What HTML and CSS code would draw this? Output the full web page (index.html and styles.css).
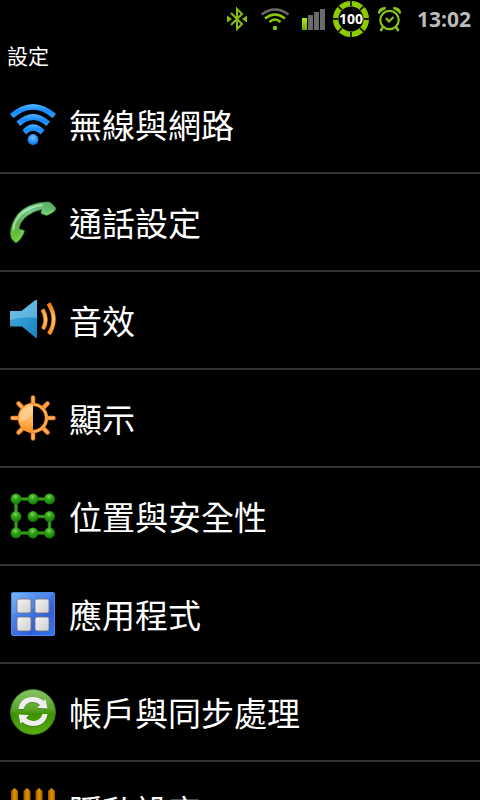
FILE: index.html
```html
<!DOCTYPE html>
<html lang="zh-Hant">
<head>
<meta charset="utf-8">
<meta name="viewport" content="width=device-width, initial-scale=1">
<title>設定</title>
<link rel="stylesheet" href="styles.css">
</head>
<body>
<header class="status">
  <svg class="status-icon" width="26" height="38" viewBox="224 0 26 38" aria-hidden="true">
    <path d="M231 13l11 11-5 5V9l5 5-11 11" fill="none" stroke="#84bd13" stroke-width="2"/>
    <path d="M227 15.500l5 3.500-5 3.500zM247 15.500l-5 3.500 5 3.500z" fill="#84bd13"/>
  </svg>
  <svg class="status-icon" width="42" height="38" viewBox="254 0 42 38" aria-hidden="true">
    <g fill="none" stroke-width="2.600">
      <path d="M261.500 14.500Q275 4.500 288.500 14.500" stroke="#686868"/>
      <path d="M265 18.500Q275 10.500 285 18.500M269.500 22Q275 17 280.500 22" stroke="#8ac800"/>
    </g>
    <circle cx="275" cy="28" r="2.200" fill="#8ac800"/>
  </svg>
  <svg class="status-icon" width="28" height="38" viewBox="300 0 28 38" aria-hidden="true">
    <defs><linearGradient id="bar" x2="0" y2="1"><stop stop-color="#acec20"/><stop offset="1" stop-color="#72a800"/></linearGradient></defs>
    <rect x="302" y="18" width="5" height="12" fill="url(#bar)"/>
    <path d="M308 15h5v15h-5zM314 12h5v18h-5zM320 9h5v21h-5z" fill="#6b6b6b"/>
  </svg>
  <svg class="status-icon" width="38" height="38" viewBox="332 0 38 38" role="img" aria-label="100">
    <circle cx="351" cy="19" r="15.300" fill="none" stroke="#8ccb00" stroke-width="5.500"/>
    <path d="M351 0v6M351 32v6M332 19h6M364 19h6M337.600 5.600l4.400 4.400M360 28l4.400 4.400M337.600 32.400l4.400-4.400M360 10l4.400-4.400" stroke="#211800" stroke-width="1.800"/>
    <text class="battery-text" x="351" y="24" text-anchor="middle">100</text>
  </svg>
  <svg class="status-icon" width="31" height="38" viewBox="374 0 31 38" aria-hidden="true">
    <g fill="none" stroke="#8ac414" stroke-width="2.200">
      <circle cx="389.500" cy="20" r="9.200"/>
      <path d="M383 27l-2.500 4M396 27l2.500 4" stroke-width="2.400"/>
      <path d="M386 18l3 3.500 4.500-4.500"/>
    </g>
    <path d="M378 13.500Q378 6.500 386 7L385.500 9.500Q381 11 379.500 14zM401 13.500Q401 6.500 393 7L393.500 9.500Q398 11 399.500 14z" fill="#8ac414"/>
  </svg>
  <time class="clock">13:02</time>
</header>
<main>
  <h1 class="title">設定</h1>
  <ul class="list">
    <li class="item"><a class="row" href="#wireless">
      <svg class="icon" viewBox="0 0 48 48" aria-hidden="true">
        <defs>
          <linearGradient id="blue" x2="0" y2="1"><stop stop-color="#56b2ff"/><stop offset=".5" stop-color="#168bff"/><stop offset="1" stop-color="#2f9cff"/></linearGradient>
          <radialGradient id="drop" cy=".35"><stop stop-color="#7cc4ff"/><stop offset="1" stop-color="#1784f0"/></radialGradient>
        </defs>
        <path d="M1 14Q24-6 47 14L43.500 18Q24 1.500 4.500 18Z" fill="url(#blue)"/>
        <path d="M7.500 21.500Q24 6.500 41 21.500L37.500 26Q24 14 11 26Z" fill="url(#blue)"/>
        <path d="M13.500 30Q24 18.500 35.500 30L31.500 34.500Q24 27 17 34.500Z" fill="url(#blue)"/>
        <circle cx="24" cy="39.500" r="5.400" fill="url(#drop)"/>
      </svg>
      <span class="label">無線與網路</span></a></li>
    <li class="item"><a class="row" href="#call">
      <svg class="icon" viewBox="0 0 48 48" aria-hidden="true">
        <defs><linearGradient id="phone" x1="1" x2="0" y2="1"><stop stop-color="#4fae5b"/><stop offset=".4" stop-color="#7acb8b"/><stop offset=".7" stop-color="#5eb04c"/><stop offset="1" stop-color="#72cf28"/></linearGradient></defs>
        <path d="M1.500 36Q1.500 26 8.500 16.500Q13 11 20 8Q29 4 38 4Q41 4 42 5L46.500 9.500V12Q43 16 37.500 17.500L32 15.500L32.500 11.500Q24 13 16 19.500Q10 26 10 31L15.500 32.500L14.500 36Q12 41 8 44.500H6L2.500 40.500Z" fill="url(#phone)" stroke="#3d8c3b" stroke-width=".7"/>
        <path d="M4.500 31Q5 23 12 16Q21 8.500 33 7" fill="none" stroke="#d3ffdf" stroke-width="2" stroke-linecap="round" opacity=".55"/>
        <path d="M34 14l4 2 7-4M11 33l3 .5-6 9" fill="none" stroke="#83e95e" stroke-width="1.500" opacity=".6"/>
      </svg>
      <span class="label">通話設定</span></a></li>
    <li class="item"><a class="row" href="#sound">
      <svg class="icon" viewBox="0 0 48 48" aria-hidden="true">
        <defs>
          <linearGradient id="speaker" x2="1" y2="1"><stop stop-color="#4ba5d0"/><stop offset=".5" stop-color="#2f9bd0"/><stop offset="1" stop-color="#1681bd"/></linearGradient>
          <linearGradient id="wave" x2="0" y2="1"><stop stop-color="#e77a18"/><stop offset=".5" stop-color="#ffc675"/><stop offset="1" stop-color="#ff8f19"/></linearGradient>
        </defs>
        <path d="M1 15H12.500L26.500 4H28V42H27L13 30.500H1Z" fill="url(#speaker)"/>
        <path d="M1 15H12.500L26.500 4H28V22Q14 20 1 24Z" fill="#b1e2f6" opacity=".38"/>
        <path d="M33.500 13.500Q39.500 23.500 34 33M39.500 7.500Q49.500 23 40 38" fill="none" stroke="#e27718" stroke-width="4.400"/>
        <path d="M33.500 13.500Q39.500 23.500 34 33M39.500 7.500Q49.500 23 40 38" fill="none" stroke="url(#wave)" stroke-width="2.800"/>
      </svg>
      <span class="label">音效</span></a></li>
    <li class="item"><a class="row" href="#display">
      <svg class="icon" viewBox="0 0 48 48" aria-hidden="true">
        <defs><linearGradient id="sun" x2="0" y2="1"><stop stop-color="#ffbd6c"/><stop offset=".55" stop-color="#ffb45a"/><stop offset="1" stop-color="#ff8f20"/></linearGradient></defs>
        <g stroke-linecap="round" fill="none">
          <path d="M24 3.500v7M24 37.500v7M3.500 24h7M37.500 24h7M9.500 9.500l4.500 4.500M34 34l4.500 4.500M9.500 38.500L14 34M34 14l4.500-4.500" stroke="#dc711c" stroke-width="4.600"/>
          <path d="M24 3.500v7M24 37.500v7M9.500 9.500l4.500 4.500M34 34l4.500 4.500M9.500 38.500L14 34M34 14l4.500-4.500" stroke="#ffae55" stroke-width="2.800"/>
          <path d="M3.500 24h7M37.500 24h7" stroke="#ffae55" stroke-width="2.800"/>
        </g>
        <circle cx="24" cy="24" r="13.500" fill="#000" stroke="#df741b" stroke-width="3.600"/>
        <circle cx="24" cy="24" r="13.500" fill="none" stroke="#ffae50" stroke-width="2.200"/>
        <path d="M24 10A14 14 0 0 0 24 38Z" fill="url(#sun)"/>
        <path d="M24 11A13 13 0 0 0 11 27Q19 26 24 19Z" fill="#ffe0b5" opacity=".5"/>
      </svg>
      <span class="label">顯示</span></a></li>
    <li class="item"><a class="row" href="#security">
      <svg class="icon" viewBox="0 0 48 48" aria-hidden="true">
        <defs><radialGradient id="node" cx=".45" cy=".3" r=".65"><stop stop-color="#83d95e"/><stop offset=".4" stop-color="#34a719"/><stop offset="1" stop-color="#167d05"/></radialGradient></defs>
        <path d="M40.500 7H7V41H40.500V24.500H24" fill="none" stroke="#1f790f" stroke-width="3.600"/>
        <path d="M40.500 7H7V41H40.500V24.500H24" fill="none" stroke="#45a32b" stroke-width="1.600"/>
        <g fill="url(#node)"><circle cx="7" cy="7" r="5.400"/><circle cx="24" cy="7" r="5.400"/><circle cx="40.500" cy="7" r="5.400"/><circle cx="7" cy="24.500" r="5.400"/><circle cx="24" cy="24.500" r="5.400"/><circle cx="40.500" cy="24.500" r="5.400"/><circle cx="7" cy="41" r="5.400"/><circle cx="24" cy="41" r="5.400"/><circle cx="40.500" cy="41" r="5.400"/></g>
      </svg>
      <span class="label">位置與安全性</span></a></li>
    <li class="item"><a class="row" href="#apps">
      <svg class="icon" viewBox="0 0 48 48" aria-hidden="true">
        <defs>
          <linearGradient id="tile" x2="1" y2="1"><stop stop-color="#70b2f8"/><stop offset=".35" stop-color="#477fe7"/><stop offset=".7" stop-color="#315fdc"/><stop offset="1" stop-color="#3479ed"/></linearGradient>
          <linearGradient id="pane" x2="1" y2="1"><stop stop-color="#f5f5f5"/><stop offset="1" stop-color="#cecece"/></linearGradient>
        </defs>
        <rect x="2.500" y="2.500" width="43" height="43" rx="1.500" fill="url(#tile)" stroke="#478be8"/>
        <path d="M3 3H45Q32 20 3 24Z" fill="#8bc4ff" opacity=".2"/>
        <g fill="url(#pane)" stroke="#746e77" stroke-width=".8"><rect x="8" y="9" width="14" height="14" rx="2"/><rect x="26" y="9" width="14" height="14" rx="2"/><rect x="8" y="27" width="14" height="14" rx="2"/><rect x="26" y="27" width="14" height="14" rx="2"/></g>
      </svg>
      <span class="label">應用程式</span></a></li>
    <li class="item"><a class="row" href="#sync">
      <svg class="icon" viewBox="0 0 48 48" aria-hidden="true">
        <defs>
          <linearGradient id="ball" x2="0" y2="1"><stop stop-color="#8ac46a"/><stop offset=".45" stop-color="#58a426"/><stop offset=".55" stop-color="#3d9100"/><stop offset="1" stop-color="#59ad12"/></linearGradient>
          <path id="arrow" d="M9.500 21C10.500 13 16 9 23.500 9Q30.500 9 34.500 13L36.500 11L38.500 20.500L28 20L31 17Q27.500 13.500 22.500 14Q16.500 15 14.500 21Z"/>
        </defs>
        <circle cx="24" cy="24" r="22.400" fill="url(#ball)" stroke="#438e20" stroke-width=".8"/>
        <g fill="#317616" opacity=".7" transform="translate(0 1)"><use href="#arrow"/><use href="#arrow" transform="rotate(180 24 23.500)"/></g>
        <g fill="#eee"><use href="#arrow"/><use href="#arrow" transform="rotate(180 24 23.500)"/></g>
      </svg>
      <span class="label">帳戶與同步處理</span></a></li>
    <li class="item"><a class="row" href="#privacy">
      <svg class="icon" viewBox="0 0 48 48" aria-hidden="true">
        <defs><linearGradient id="wood"><stop stop-color="#9c5100"/><stop offset=".5" stop-color="#e19500"/><stop offset="1" stop-color="#a96100"/></linearGradient></defs>
        <path d="M2 20H46V26H2ZM2 35H46V40H2Z" fill="#a66400"/>
        <g fill="url(#wood)"><path d="M2 46V5L5.500 2L9 5V46Z"/><path d="M14.500 46V5L18 2L21.500 5V46Z"/><path d="M26.500 46V5L30 2L33.500 5V46Z"/><path d="M39 46V5L42.500 2L46 5V46Z"/></g>
      </svg>
      <span class="label">隱私設定</span></a></li>
  </ul>
</main>
</body>
</html>
```

FILE: styles.css
```css
* {
  box-sizing: border-box;
}

body {
  margin: 0;
  height: 100vh;
  overflow: hidden;
  background: #000;
  color: #fff;
  font-family: "Noto Sans CJK TC", "Noto Sans", sans-serif;
}

.status {
  display: flex;
  justify-content: flex-end;
  align-items: center;
  gap: 4px;
  height: 38px;
  padding-right: 9px;
}

.status-icon {
  display: block;
  flex: none;
}

.battery-text {
  fill: #fff;
  font: bold 14px "Open Sans", sans-serif;
}

.clock {
  margin-left: 8px;
  color: #bbb;
  font: bold 21px/38px "Open Sans", sans-serif;
}

.title {
  margin: 0;
  padding: 0 7px 4px;
  font-size: 21px;
  font-weight: 400;
  line-height: 34px;
}

.list {
  margin: 0;
  padding: 0;
  list-style: none;
}

.item {
  border-bottom: 2px solid #333;
}

.row {
  display: flex;
  align-items: center;
  gap: 12px;
  min-height: 96px;
  padding: 0 9px;
  color: inherit;
  text-decoration: none;
}

.icon {
  flex: none;
  width: 48px;
  height: 48px;
}

.label {
  font-size: 33px;
  line-height: 48px;
}
```
